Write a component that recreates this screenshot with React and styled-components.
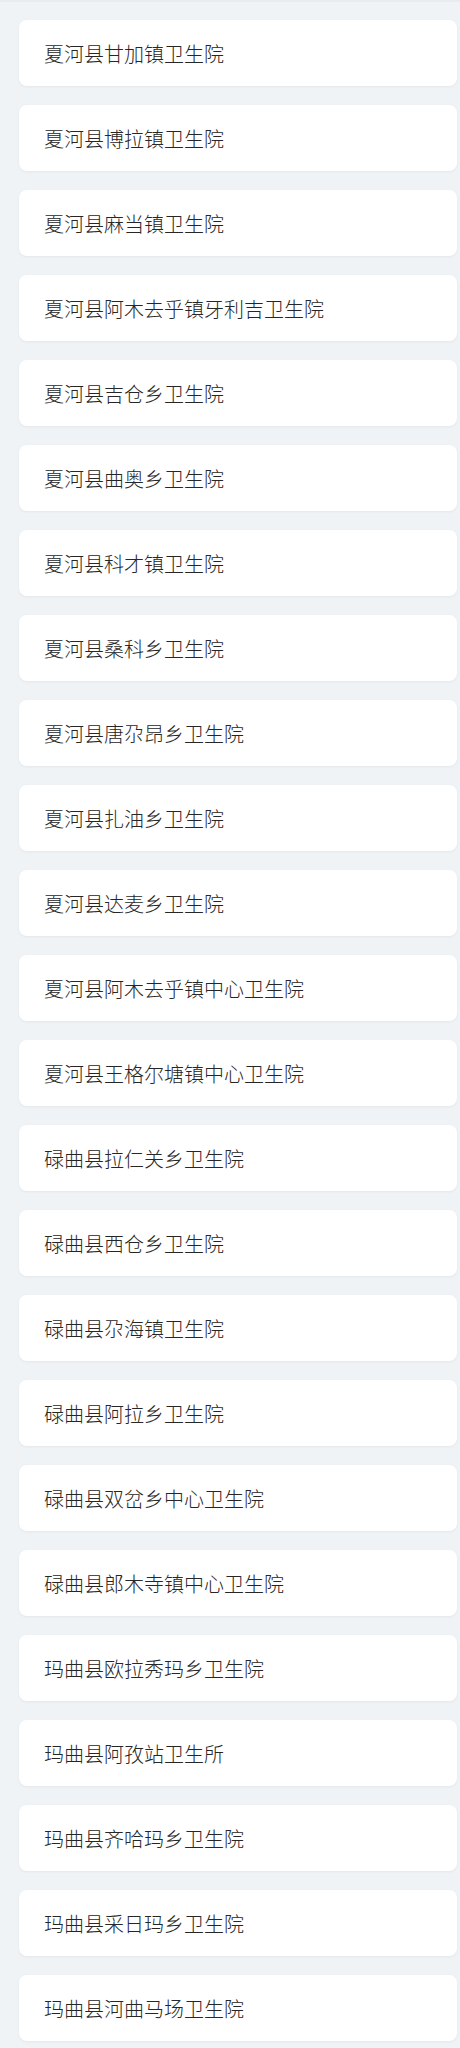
import styled, { createGlobalStyle } from 'styled-components';

const GlobalStyle = createGlobalStyle`
  html, body {
    margin: 0;
    padding: 0;
    background-color: #f0f3f6;
  }
`;

const PageRoot = styled.div`
  display: flex;
  flex-direction: column;
  gap: 19px;
  padding: 18px 3px 20px 19px;
  border-top: 2px solid #e8ecef;
  font-family: "Noto Sans CJK SC", "Noto Sans", sans-serif;
`;

const Card = styled.div`
  height: 66px;
  display: flex;
  align-items: center;
  padding: 0 25px;
  background-color: #fff;
  border-radius: 8px;
  box-shadow: 0 1px 3px rgba(0, 0, 0, .05);
  font-size: 20px;
  font-weight: 300;
  color: #262626;
  box-sizing: border-box;
`;

const hospitals = [
  '夏河县甘加镇卫生院',
  '夏河县博拉镇卫生院',
  '夏河县麻当镇卫生院',
  '夏河县阿木去乎镇牙利吉卫生院',
  '夏河县吉仓乡卫生院',
  '夏河县曲奥乡卫生院',
  '夏河县科才镇卫生院',
  '夏河县桑科乡卫生院',
  '夏河县唐尕昂乡卫生院',
  '夏河县扎油乡卫生院',
  '夏河县达麦乡卫生院',
  '夏河县阿木去乎镇中心卫生院',
  '夏河县王格尔塘镇中心卫生院',
  '碌曲县拉仁关乡卫生院',
  '碌曲县西仓乡卫生院',
  '碌曲县尕海镇卫生院',
  '碌曲县阿拉乡卫生院',
  '碌曲县双岔乡中心卫生院',
  '碌曲县郎木寺镇中心卫生院',
  '玛曲县欧拉秀玛乡卫生院',
  '玛曲县阿孜站卫生所',
  '玛曲县齐哈玛乡卫生院',
  '玛曲县采日玛乡卫生院',
  '玛曲县河曲马场卫生院',
];

const App = () => (
  <>
    <GlobalStyle />
    <PageRoot>
      {hospitals.map((name) => (
        <Card key={name}>{name}</Card>
      ))}
    </PageRoot>
  </>
);

export default App;
